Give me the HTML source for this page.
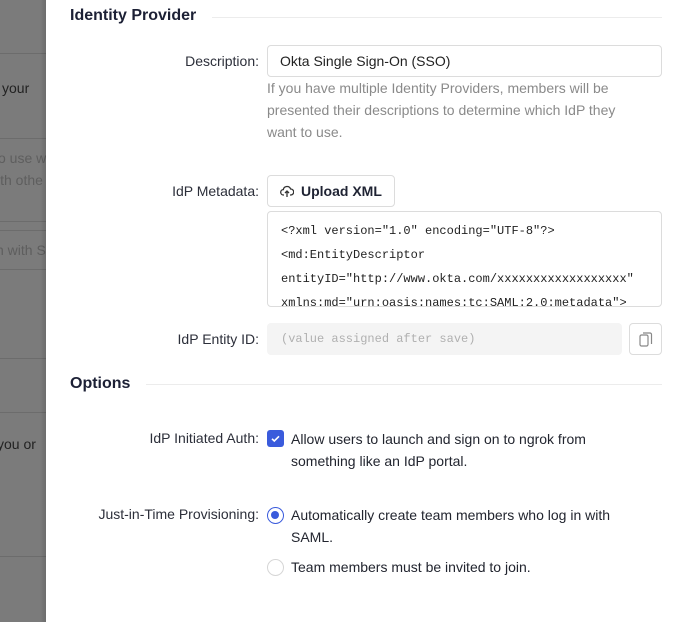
<!DOCTYPE html>
<html><head><style>
*{box-sizing:border-box;margin:0;padding:0}
body{width:679px;height:622px;overflow:hidden;position:relative;font-family:"Liberation Sans",sans-serif;background:#fff;color:#1f2333}
.ov{position:absolute;left:0;top:0;width:46px;height:622px;background:#7b7b7b;overflow:hidden}
.ov .l{position:absolute;left:0;width:46px;height:1px;background:#6c6c6c}
.ov .t{position:absolute;left:0;font-size:14px;white-space:nowrap;color:#222}
.ov .g{color:#5e5e5e}
.sh{position:absolute;left:40px;top:0;width:6px;height:622px;background:linear-gradient(90deg,rgba(0,0,0,0),rgba(0,0,0,.12))}
.h{position:absolute;left:70px;font-size:16px;font-weight:bold;color:#1c2035}
.hl{position:absolute;height:1px;background:#ececec;right:17px}
.lab{position:absolute;right:420px;font-size:14px;color:#2c2f3a;white-space:nowrap}
.box{position:absolute;border:1px solid #dcdcdc;border-radius:4px;background:#fff}
.help{position:absolute;left:267px;font-size:14px;line-height:22px;color:#8a8a8a;width:372px}
.mono{font-family:"Liberation Mono",monospace;font-size:12px;color:#222}
.txt{position:absolute;left:291px;font-size:14px;line-height:22px;color:#22252f}
</style></head><body>
<div class="ov">
<div class="l" style="top:53px"></div>
<div class="l" style="top:138px"></div>
<div class="l" style="top:221px"></div>
<div class="l" style="top:230px"></div>
<div class="l" style="top:269px"></div>
<div class="l" style="top:358px"></div>
<div class="l" style="top:412px"></div>
<div class="l" style="top:556px"></div>
<div class="t" style="left:2px;top:80px">your</div>
<div class="t g" style="left:-2px;top:150px">o use w</div>
<div class="t g" style="left:-3px;top:172px">ith othe</div>
<div class="t g" style="left:-4px;top:242px">n with S</div>
<div class="t" style="left:-3px;top:436px">you or</div>
</div>
<div class="sh"></div>

<div class="h" style="top:7px">Identity Provider</div>
<div class="hl" style="left:212px;top:17px"></div>

<div class="lab" style="top:53px">Description:</div>
<div class="box" style="left:267px;top:45px;width:395px;height:32px;padding:7px 12px;font-size:14px;color:#222">Okta Single Sign-On (SSO)</div>
<div class="help" style="top:77px">If you have multiple Identity Providers, members will be presented their descriptions to determine which IdP they want to use.</div>

<div class="lab" style="top:183px">IdP Metadata:</div>
<div class="box" style="left:267px;top:175px;width:128px;height:32px;font-size:14px;font-weight:bold;padding:7px 0 0 33px;color:#1f2333">Upload XML
<svg style="position:absolute;left:12px;top:9px" width="14" height="13" viewBox="0 0 14 13" fill="none" stroke="#333" stroke-width="1.3"><path d="M4 10H3.5A2.7 2.7 0 0 1 3.3 4.6 3.8 3.8 0 0 1 10.6 4a2.9 2.9 0 0 1 .2 6H10"/><path d="M7 12V6M5 8l2-2 2 2"/></svg></div>
<div class="box mono" style="left:267px;top:211px;width:395px;height:96px;padding:7px 13px;line-height:24px;overflow:hidden;white-space:nowrap">&lt;?xml version="1.0" encoding="UTF-8"?&gt;<br>&lt;md:EntityDescriptor<br>entityID="http://www.okta.com/xxxxxxxxxxxxxxxxxx"<br>xmlns:md="urn:oasis:names:tc:SAML:2.0:metadata"&gt;</div>

<div class="lab" style="top:331px">IdP Entity ID:</div>
<div class="mono" style="position:absolute;left:267px;top:323px;width:355px;height:32px;background:#f4f4f4;border-radius:4px;padding:9px 14px;color:#b0b0b0">(value assigned after save)</div>
<div class="box" style="left:629px;top:323px;width:33px;height:32px">
<svg style="position:absolute;left:9px;top:7px" width="14" height="17" viewBox="0 0 14 17" fill="none" stroke="#888" stroke-width="1.2"><rect x="1" y="4" width="8" height="11" rx="1.5"/><path d="M4 2h7a1.5 1.5 0 0 1 1.5 1.5V13"/></svg></div>

<div class="h" style="top:375px">Options</div>
<div class="hl" style="left:146px;top:384px"></div>

<div class="lab" style="top:430px">IdP Initiated Auth:</div>
<div style="position:absolute;left:267px;top:430px;width:17px;height:17px;background:#3a5bdc;border-radius:3px">
<svg width="17" height="17" viewBox="0 0 17 17"><path d="M5 8.8l2.3 2.2L12 6.3" stroke="#fff" stroke-width="1.6" fill="none"/></svg></div>
<div class="txt" style="top:428px;width:325px">Allow users to launch and sign on to ngrok from something like an IdP portal.</div>

<div class="lab" style="top:506px">Just-in-Time Provisioning:</div>
<div style="position:absolute;left:267px;top:507px;width:17px;height:17px;border:1.5px solid #3a5bdc;border-radius:50%"><div style="position:absolute;left:3px;top:3px;width:8px;height:8px;border-radius:50%;background:#3a5bdc"></div></div>
<div class="txt" style="top:504px;width:350px">Automatically create team members who log in with SAML.</div>
<div style="position:absolute;left:267px;top:559px;width:17px;height:17px;border:1px solid #d6d6d6;border-radius:50%"></div>
<div class="txt" style="top:556px">Team members must be invited to join.</div>
</body></html>
